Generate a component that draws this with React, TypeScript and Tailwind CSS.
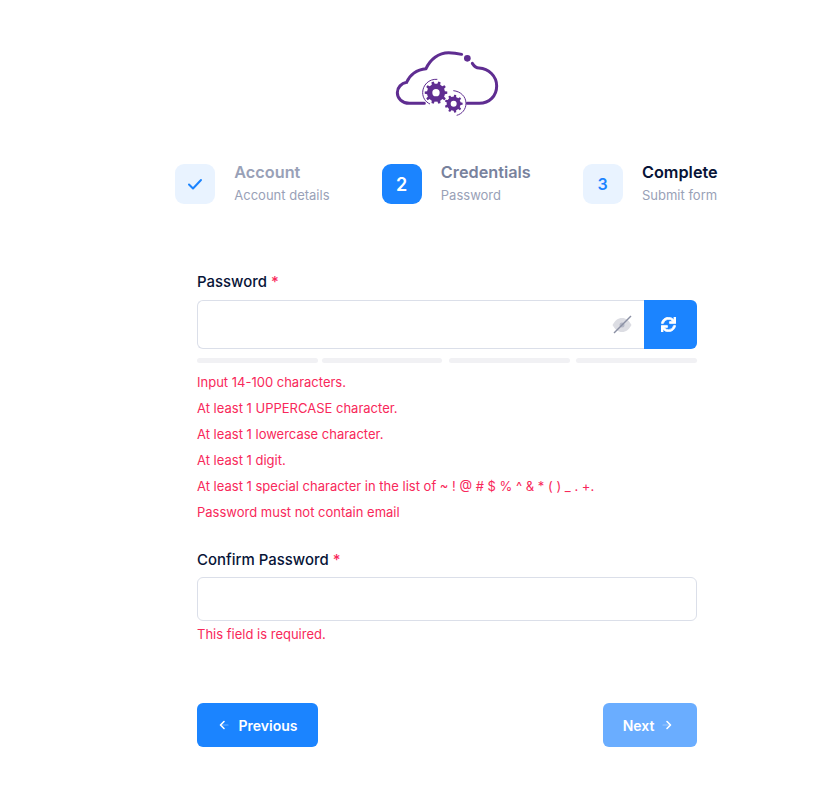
import React from 'react';
import { FaSync } from 'react-icons/fa';

// builds a toothed gear outline, with a round hole in the middle
function gearPath(cx: number, cy: number, outer: number, inner: number, hole: number, teeth: number) {
  const pts: string[] = [];
  const step = (Math.PI * 2) / teeth;
  for (let i = 0; i < teeth; i++) {
    const a = i * step;
    const corners: [number, number][] = [
      [inner, a - step * 0.5],
      [inner, a - step * 0.27],
      [outer, a - step * 0.16],
      [outer, a + step * 0.16],
      [inner, a + step * 0.27],
    ];
    corners.forEach(([r, t]) => {
      pts.push(`${(cx + r * Math.cos(t)).toFixed(1)} ${(cy + r * Math.sin(t)).toFixed(1)}`);
    });
  }
  const ring = `M${cx - hole} ${cy}a${hole} ${hole} 0 1 0 ${hole * 2} 0a${hole} ${hole} 0 1 0 ${-hole * 2} 0Z`;
  return `M${pts.join('L')}Z${ring}`;
}

function Logo() {
  return (
    <svg viewBox="0 0 390 255" className="w-[130px] h-[85px] block" fill="none" stroke="#5f2d91">
      <path
        d="M133 190H88C66 190 52 175 52 158C52 142 64 130 80 127C88 106 110 88 138 86C150 58 176 38 206 38C220 38 233 40 245 43"
        strokeWidth="9"
        strokeLinecap="round"
      />
      <path
        d="M277 70C282 78 288 84 297 84C326 86 350 108 350 138C350 168 328 190 298 190H262"
        strokeWidth="9"
        strokeLinecap="round"
      />
      <circle cx="262" cy="55" r="10" fill="#5f2d91" stroke="none" />
      <path d={gearPath(168, 158, 34, 27, 11, 10)} fill="#5f2d91" stroke="none" fillRule="evenodd" />
      <path d={gearPath(221, 191, 27, 21, 9, 9)} fill="#5f2d91" stroke="none" fillRule="evenodd" />
      <path d="M172 118C146 116 128 136 128 158C128 172 136 186 150 192" strokeWidth="3" />
      <path d="M220 152C242 154 258 170 258 190C258 208 246 222 230 226" strokeWidth="3" />
    </svg>
  );
}

function Step({ icon, active, title, sub, titleColor }: { icon: React.ReactNode; active?: boolean; title: string; sub: string; titleColor: string }) {
  return (
    <div className="flex items-center shrink-0">
      <div
        className={
          active
            ? 'w-10 h-10 rounded-[9px] flex items-center justify-center bg-[#1b84ff] text-white text-[18px] font-semibold'
            : 'w-10 h-10 rounded-[9px] flex items-center justify-center bg-[#e9f3ff] text-[#1b84ff] text-[16px] font-semibold'
        }
      >
        {icon}
      </div>
      <div className="flex flex-col ml-[19.3px] -mt-[4px]">
        <div className={`text-[16.25px] leading-[20px] font-semibold ${titleColor}`}>{title}</div>
        <div className="text-[13px] leading-[16px] mt-[5px] text-[#99a1b7]">{sub}</div>
      </div>
    </div>
  );
}

function ErrorLine({ children }: { children: React.ReactNode }) {
  return <div className="h-[26px] leading-[26px] text-[13px] text-[#f8285a]">{children}</div>;
}

export default function App() {
  return (
    <div className="w-[817px] h-[791px] bg-white overflow-hidden font-['Inter',sans-serif]">
      <div className="pt-[40px] pl-[380px]">
        <Logo />
      </div>

      <div className="flex mt-[39px] ml-[175px] gap-[52px]">
        <Step
          title="Account"
          sub="Account details"
          titleColor="text-[#99a1b7]"
          icon={
            <svg viewBox="0 0 20 20" className="w-5 h-5" fill="none" stroke="#1b84ff" strokeWidth="2" strokeLinecap="round" strokeLinejoin="round">
              <path d="M4 10.5L8 14.5L16 6" />
            </svg>
          }
        />
        <Step title="Credentials" sub="Password" titleColor="text-[#78829d]" active icon="2" />
        <Step title="Complete" sub="Submit form" titleColor="text-[#071437]" icon="3" />
      </div>

      <div className="w-[500px] ml-[197px] mt-[68px]">
        <div className="text-[14.95px] leading-[20px] font-medium text-[#071437]">
          Password <span className="text-[#f8285a]">*</span>
        </div>
        <div className="flex mt-[8px] h-[49px]">
          <div className="flex-1 flex items-center justify-end pr-[11px] border border-r-0 border-[#dbdfe9] rounded-l-[6px]">
            <svg viewBox="0 0 22 20" className="w-[22px] h-5">
              <path d="M1.5 10C4 5.5 7 3 11 3C15 3 18 5.5 20.5 10C18 14.5 15 17 11 17C7 17 4 14.5 1.5 10Z" fill="#dcdde3" />
              <circle cx="11" cy="10" r="2.5" fill="#b5b8c6" />
              <path d="M20 1L3 18" stroke="#8a8fa3" strokeWidth="1.4" />
            </svg>
          </div>
          <button className="w-[53px] pr-[5px] flex items-center justify-center bg-[#1b84ff] text-white rounded-r-[6px]">
            <FaSync className="w-[15px] h-[15px]" stroke="currentColor" strokeWidth={24} />
          </button>
        </div>

        <div className="flex mt-[9px]">
          <div className="w-[121px] h-[5px] rounded-[3px] bg-[#f1f1f4]" />
          <div className="w-[120px] h-[5px] ml-[4px] rounded-[3px] bg-[#f1f1f4]" />
          <div className="w-[121px] h-[5px] ml-[7px] rounded-[3px] bg-[#f1f1f4]" />
          <div className="w-[121px] h-[5px] ml-[6px] rounded-[3px] bg-[#f1f1f4]" />
        </div>

        <div className="mt-[6px]">
          <ErrorLine>Input 14-100 characters.</ErrorLine>
          <ErrorLine>At least 1 UPPERCASE character.</ErrorLine>
          <ErrorLine>At least 1 lowercase character.</ErrorLine>
          <ErrorLine>At least 1 digit.</ErrorLine>
          <ErrorLine>At least 1 special character in the list of ~ ! @ # $ % ^ &amp; * ( ) _ . +.</ErrorLine>
          <ErrorLine>Password must not contain email</ErrorLine>
        </div>

        <div className="text-[14.95px] leading-[20px] font-medium text-[#071437] mt-[25px]">
          Confirm Password <span className="text-[#f8285a]">*</span>
        </div>
        <div className="h-[44px] mt-[7px] border border-[#dbdfe9] rounded-[6px]" />
        <ErrorLine>This field is required.</ErrorLine>

        <div className="flex justify-between mt-[56px]">
          <button className="w-[121px] h-[44px] flex items-center justify-center rounded-[6px] bg-[#1b84ff] text-white text-[14px] font-semibold">
            <svg viewBox="0 0 14 14" className="w-[14px] h-[14px] mr-[7px]" fill="none" stroke="white" strokeLinecap="round" strokeLinejoin="round">
              <path d="M6 10.5L2.5 7L6 3.5" strokeWidth="1.6" />
              <path d="M3 7H10" strokeWidth="1.2" opacity="0.35" />
            </svg>
            Previous
          </button>
          <button className="w-[94px] h-[44px] pr-[3px] flex items-center justify-center rounded-[6px] bg-[#6aadff] text-white text-[14px] font-semibold">
            Next
            <svg viewBox="0 0 14 14" className="w-[14px] h-[14px] ml-[6px]" fill="none" stroke="white" strokeLinecap="round" strokeLinejoin="round">
              <path d="M7 3.5L10.5 7L7 10.5" strokeWidth="1.6" />
              <path d="M3 7H10" strokeWidth="1.2" opacity="0.35" />
            </svg>
          </button>
        </div>
      </div>
    </div>
  );
}
